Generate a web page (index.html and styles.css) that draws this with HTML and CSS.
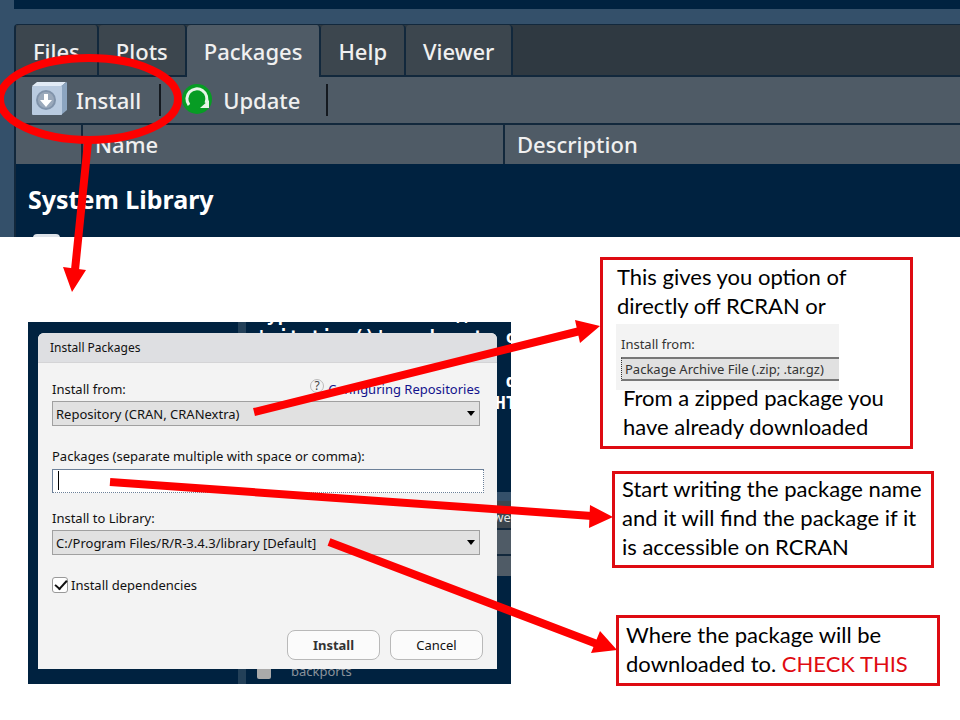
FILE: index.html
```html
<!DOCTYPE html>
<html lang="en">
<head>
<meta charset="utf-8">
<title>Installing R packages</title>
<link rel="stylesheet" href="styles.css">
</head>
<body>
<main class="slide">
  <section class="pane">
    <div class="pane-above"></div>
    <div class="pane-body">
      <nav class="tabs">
        <button class="tab">Files</button>
        <button class="tab">Plots</button>
        <button class="tab tab-active">Packages</button>
        <button class="tab">Help</button>
        <button class="tab">Viewer</button>
      </nav>
      <div class="toolbar">
        <button class="tool tool-install">
          <svg width="36" height="36" viewBox="0 0 36 36" aria-hidden="true">
            <path d="M1 4 6 0H35L31 4Z" fill="#e1ebf6"/>
            <path d="M30 4 36 0V28L30 33Z" fill="#8ca5c0"/>
            <rect x="1" y="4" width="30" height="29" rx="1" fill="#b9cbe0"/>
            <circle cx="15" cy="18" r="10" fill="#8093aa"/>
            <circle cx="15" cy="18" r="8" fill="#9aa9bb"/>
            <path d="M13 12h4v6h4l-6 7-6-7h4z" fill="#fff"/>
          </svg>
          <span>Install</span>
        </button>
        <button class="tool tool-update">
          <svg width="32" height="34" viewBox="0 0 32 34" aria-hidden="true">
            <circle cx="15" cy="16" r="15" fill="#079c24"/>
            <path d="M7 22A10 10 0 1 1 24 20" fill="none" stroke="#e8f5e8" stroke-width="3"/>
            <path d="M18 25h9v-8z" fill="#e8f5e8"/>
          </svg>
          <span>Update</span>
        </button>
      </div>
      <table class="packages">
        <thead><tr><th class="col-check"></th><th class="col-name">Name</th><th>Description</th></tr></thead>
        <tbody>
          <tr><td class="group" colspan="3">System Library</td></tr>
          <tr><td class="pick" colspan="3"><input class="row-check" type="checkbox" aria-label="Select package"></td></tr>
        </tbody>
      </table>
    </div>
  </section>

  <div class="lower">
    <section class="shot">
      <div class="console" aria-hidden="true">
        <div class="splitter"></div>
        <div class="code code-top">Type 'contributors()'
'citation()' on how to c</div>
        <div class="code code-side"> d
HT</div>
        <div class="strip"><span>Viewer</span></div>
        <div class="backrow"><i></i><span>backports</span></div>
      </div>
      <form class="dialog">
        <h1 class="dialog-title">Install Packages</h1>
        <div class="dialog-body">
          <div class="label-row">
            <label for="source">Install from:</label>
            <a class="help" href="#"><span class="help-mark">?</span>Configuring Repositories</a>
          </div>
          <div class="select"><select id="source"><option>Repository (CRAN, CRANextra)</option></select></div>
          <label class="label" for="pkgs">Packages (separate multiple with space or comma):</label>
          <div class="entry"><input id="pkgs" type="text"><span class="caret"></span></div>
          <label class="label" for="lib">Install to Library:</label>
          <div class="select"><select id="lib"><option>C:/Program Files/R/R-3.4.3/library [Default]</option></select></div>
          <div class="deps"><input class="deps-check" id="deps" type="checkbox" checked><label for="deps">Install dependencies</label></div>
          <div class="actions">
            <button class="action action-main" type="button">Install</button>
            <button class="action" type="button">Cancel</button>
          </div>
        </div>
      </form>
    </section>

    <aside class="notes">
      <div class="note note-source">
        <p>This gives you option of<br>directly off RCRAN or</p>
        <div class="clip">
          <label for="archive">Install from:</label>
          <select id="archive"><option>Package Archive File (.zip; .tar.gz)</option></select>
        </div>
        <p class="indent">From a zipped package you<br>have already downloaded</p>
      </div>
      <div class="note note-name"><p>Start writing the package name<br>and it will find the package if it<br>is accessible on RCRAN</p></div>
      <div class="note note-library"><p>Where the package will be<br>downloaded to. <em>CHECK THIS</em></p></div>
    </aside>
  </div>

  <svg class="marks" viewBox="0 0 960 720" aria-hidden="true">
    <g fill="none" stroke="#fe0000" stroke-width="8">
      <ellipse cx="89" cy="99" rx="89" ry="41"/>
      <path d="M88 142 75 270M254 412 580 331M110 482 592 516M329 542 597 644"/>
    </g>
    <path fill="#fe0000" d="M63 267 86 270 72 292ZM575 320 600 326 580 343ZM590 505 613 517 589 528ZM600 631 617 650 591 653Z"/>
  </svg>
</main>
</body>
</html>
```
FILE: styles.css
```css
* { box-sizing: border-box; }
body { margin: 0; background: #fff; }
button, input, select { font: inherit; color: inherit; }
.slide { position: relative; overflow: hidden; }

.pane {
  height: 237px;
  overflow: hidden;
  padding-left: 14px;
  background: #34506a;
  color: #f0f0f0;
  font: 500 22px/30px "Noto Sans", "Open Sans", sans-serif;
}
.pane-above { height: 9px; margin-bottom: 15px; background: #002240; }
.pane-body { border: 2px solid #12283c; border-width: 1px 0 0 2px; border-radius: 4px 0 0 0; background: #002240; }
.tabs { display: flex; background: #2f3941; border-bottom: 2px solid #12283c; }
.tab {
  height: 50px;
  padding: 2px 17px 0;
  border: 0;
  border-right: 2px solid #12283c;
  border-radius: 4px 4px 0 0;
  background: #3c464e;
}
.tab-active { height: 52px; margin-bottom: -2px; padding-bottom: 2px; background: #4f5b66; }
.toolbar { display: flex; align-items: center; height: 46px; padding-left: 15px; background: #4f5b66; }
.tool {
  display: flex;
  align-items: center;
  height: 32px;
  padding: 0;
  border: 0;
  border-right: 2px solid #14191f;
  background: none;
}
.tool svg { flex: none; }
.tool-install { gap: 9px; padding-right: 18px; margin-right: 21px; }
.tool-update { gap: 9px; padding-right: 26px; }
.packages { width: 100%; border-collapse: collapse; table-layout: fixed; }
.packages th {
  height: 40px;
  padding: 0 0 2px 12px;
  border-top: 2px solid #12283c;
  border-right: 2px solid #12283c;
  background: #4f5b66;
  font-weight: 500;
  text-align: left;
}
.packages th:last-child { border-right: 0; }
.col-check { width: 66px; }
.col-name { width: 422px; }
.group { height: 70px; padding: 0 0 0 12px; color: #fff; font-size: 25px; font-weight: 700; }
.pick { padding: 0 0 0 17px; }
.row-check { appearance: none; display: block; width: 27px; height: 27px; margin: 0; border-radius: 4px; background: #dde2e8; }

.lower { display: grid; grid-template-columns: 483px 1fr; column-gap: 89px; padding: 20px 20px 0 28px; }
.shot { position: relative; height: 362px; margin-top: 65px; padding: 11px 14px 0 10px; background: #002240; overflow: hidden; color: #111; font: 13px/20px "Noto Sans", "Open Sans", sans-serif; }
.console { position: absolute; inset: 0; overflow: hidden; }
.splitter { position: absolute; top: 0; bottom: 0; left: 210px; width: 8px; background: #234058; }
.code { position: absolute; color: #fff; font: 700 18px/22px "DejaVu Sans Mono", monospace; white-space: pre; }
.code-top { top: -18px; left: 228px; }
.code-side { top: 48px; left: 467px; }
.strip { position: absolute; top: 170px; right: 0; width: 60px; height: 84px; padding: 6px 0 0 24px; border-top: 9px solid #34506a; background: linear-gradient(#3c464e 27px, #12283c 27px 29px, #4f5b66 29px 53px, #12283c 53px 55px, #4f5b66 55px); color: #e4e4e4; }
.backrow { position: absolute; top: 339px; left: 229px; display: flex; align-items: center; gap: 20px; color: #8b929b; }
.backrow i { width: 14px; height: 16px; border-radius: 2px; background: #aaa; }

.dialog { position: relative; border-radius: 6px 6px 0 0; background: #f3f3f3; overflow: hidden; }
.dialog-title { height: 30px; margin: 0; padding: 0 12px; border-bottom: 1px solid #d4d4d6; background: #dedfe2; font: 12px/30px "Noto Sans", "Open Sans", sans-serif; }
.dialog-body { padding: 16px 17px 9px 14px; }
.label-row { display: flex; justify-content: space-between; }
.help { display: flex; gap: 4px; color: #12128c; text-decoration: none; }
.help-mark { width: 14px; height: 14px; border: 1px solid #bbb; border-radius: 50%; color: #444; font-size: 12px; line-height: 12px; text-align: center; }
.select { position: relative; margin-top: 2px; }
.select select { display: block; appearance: none; width: 100%; height: 25px; padding: 0 3px; border: 1px solid #a0a0a0; border-radius: 0; background: #e1e1e1; }
.select::after { content: ""; position: absolute; top: 10px; right: 5px; border: 4px solid transparent; border-top: 5px solid #000; border-bottom: 0; }
.label { display: block; margin-top: 20px; }
.entry { position: relative; margin: 3px -4px 0 0; }
.entry input { display: block; width: 100%; height: 24px; border: 1px solid #6c8098; border-right-style: dotted; border-bottom-style: dotted; background: #fff; outline: 0; }
.caret { position: absolute; top: 2px; left: 6px; width: 1px; height: 19px; background: #000; }
.entry + .label { margin-top: 15px; }
.deps { display: flex; align-items: center; gap: 3px; margin-top: 20px; }
.deps-check { appearance: none; display: grid; width: 16px; height: 16px; margin: 0; border: 1px solid #999; border-radius: 3px; background: #fff; }
.deps-check:checked::before { content: ""; width: 10px; height: 5px; margin: 2px 0 0 2px; border: solid #111; border-width: 0 0 2px 2px; rotate: -48deg; }
.actions { display: flex; justify-content: flex-end; gap: 10px; margin: 35px -3px 0 0; }
.action { width: 93px; height: 30px; padding: 0; border: 1px solid #b9b9b9; border-radius: 8px; background: #fbfbfb; }
.action-main { font-weight: 700; color: #333; }

.notes { display: grid; justify-items: start; align-content: start; color: #000; font: 22px/29px Lato, "Open Sans", sans-serif; }
.note { border: 3px solid #de0b12; background: #fff; white-space: nowrap; }
.note p { margin: 0; }
.note em { color: #e00b12; font-style: normal; }
.note-source { width: 313px; height: 192px; padding: 2px 14px; }
.indent { padding-left: 6px; }
.clip { width: 223px; height: 66px; margin: 4px 0 -7px -1px; padding: 10px 0 0 5px; overflow: hidden; background: #f3f3f3; color: #333; font: 13px/20px "Noto Sans", "Open Sans", sans-serif; }
.clip label { display: block; }
.clip select { appearance: none; display: block; width: 230px; height: 24px; margin-top: 3px; padding: 0 3px; border: 2px solid #777; border-left: 1px dotted #333; border-radius: 0; background: #e1e1e1; }
.note-name { width: 322px; margin: 22px 0 47px 12px; padding: 0 7px 4px; }
.note-library { width: 324px; margin-left: 16px; padding: 2px 7px 5px; }

.marks { position: absolute; top: 0; left: 0; width: 960px; pointer-events: none; }
```
